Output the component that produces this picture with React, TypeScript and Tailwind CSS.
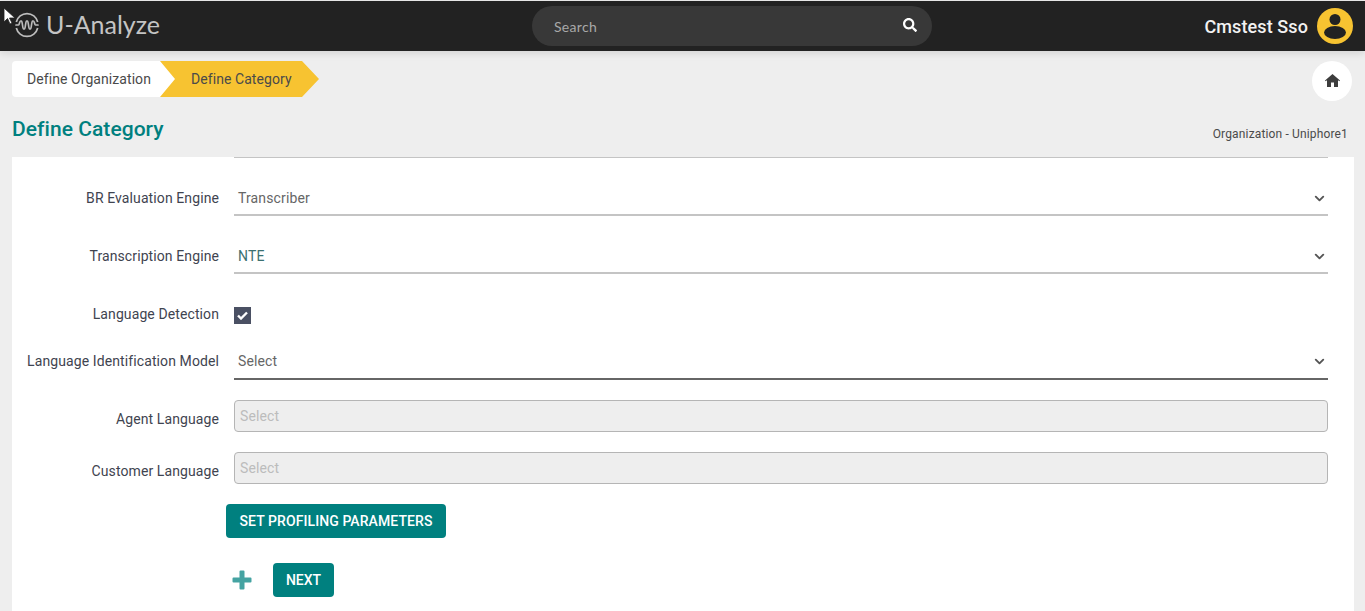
import { FaSearch } from "react-icons/fa";
import { ChevronDown } from "lucide-react";
import type { ReactNode } from "react";

function Logo() {
  return (
    <svg width="26" height="26" viewBox="0 0 26 26" fill="none" stroke="#bdbdbd" strokeWidth="1.700" className="shrink-0">
      <path d="M2.300 10A11 11 0 0 1 23.700 10" />
      <path d="M2.300 16A11 11 0 0 0 23.700 16" />
      <path
        d="M2 13h2.500c1 0 1-4 2-4h1c1 0 1 8 2 8h1c1 0 1-8 2-8h1c1 0 1 8 2 8h1c1 0 1-8 2-8h1c1 0 1 4 2 4H24"
        strokeLinecap="round"
      />
    </svg>
  );
}

function Avatar() {
  return (
    <svg width="36" height="36" viewBox="0 0 36 36" className="shrink-0">
      <circle cx="18" cy="18" r="18" fill="#f7c331" />
      <circle cx="18" cy="11.500" r="5.500" fill="#222222" />
      <ellipse cx="18" cy="24.500" rx="11" ry="6.500" fill="#222222" />
    </svg>
  );
}

function HomeIcon() {
  return (
    <svg width="15" height="13" viewBox="0 0 15 13" fill="#3d3d3d" className="mb-[2px]">
      <path d="M7.500 0 15 6.500l-.6.800L13 6.300V13H9V8.500H6V13H2V6.300L.6 7.300 0 6.500z" />
    </svg>
  );
}

function Row({
  label,
  className,
  labelClass,
  children,
}: {
  label: string;
  className: string;
  labelClass: string;
  children: ReactNode;
}) {
  return (
    <div className={`flex items-center ${className}`}>
      <label className={`w-[207px] shrink-0 text-right text-[14px] leading-5 tracking-[0.1px] text-[#3f4450] ${labelClass}`}>
        {label}
      </label>
      <div className="ml-[15px] min-w-0 flex-1">{children}</div>
    </div>
  );
}

function Select({ value, dark, textColor }: { value: string; dark?: boolean; textColor?: string }) {
  return (
    <div
      className={`flex items-center justify-between border-b-2 pl-1 pr-[1px] ${dark ? "h-[34px] border-[#666666] pb-[2px]" : "h-8 border-[#c4c4c4] pb-[1px]"}`}
    >
      <span className={`text-[14px] tracking-[0.14px] ${textColor ?? "text-[#666666]"}`}>{value}</span>
      <ChevronDown size={15} strokeWidth={3} className="text-[#555555]" />
    </div>
  );
}

function DisabledInput() {
  return (
    <div className="flex h-8 items-center rounded border border-[#b5b5b5] bg-[#eeeeee] px-[5px] text-[14px] tracking-[0.14px] text-[#bcbcbc]">
      Select
    </div>
  );
}

export default function App() {
  return (
    <div className="relative flex h-[611px] flex-col overflow-hidden bg-[#eeeeee] font-['Roboto',sans-serif]">
      {/* mouse pointer caught in the screenshot */}
      <svg width="13" height="18" viewBox="0 0 13 18" className="absolute left-[3px] top-[7px] z-10">
        <path d="M1 1v14l3.500-3.500L7 17l2-1-2.500-5H12z" fill="#ffffff" stroke="#222222" strokeWidth="0.8" />
      </svg>

      <header className="mt-px flex h-[50px] shrink-0 items-center justify-between bg-[#222222] pl-[14px] pr-[12px] shadow-[0_2px_8px_rgba(0,0,0,0.12)]">
        <div className="mb-[3px] flex w-[518px] items-center gap-[6px]">
          <Logo />
          <span className="font-['Lato',sans-serif] text-[25px] leading-none text-[#c4c4c4]">U-Analyze</span>
        </div>
        <div className="flex h-10 w-[400px] items-center justify-between rounded-full bg-[#383838] pl-[22px] pr-[15px]">
          <span className="font-['Lato',sans-serif] text-[14px] tracking-[0.3px] text-[#a8a8a8]">Search</span>
          <FaSearch size={14} className="mb-[2px] text-white" />
        </div>
        <div className="flex w-[421px] items-center justify-end gap-[9px]">
          <span className="text-[18px] font-medium tracking-[0.1px] text-[#f2f2f2]">Cmstest Sso</span>
          <Avatar />
        </div>
      </header>

      <div className="mt-[10px] flex items-start justify-between pl-3 pr-[13px]">
        <div className="flex h-9 items-center text-[14px] tracking-[0.07px] text-[#4a4a4a]">
          <div className="flex h-full w-[163px] items-center rounded-l bg-white pl-[15px]">Define Organization</div>
          <div className="-ml-[15px] flex h-full w-[159px] items-center bg-[#f7c331] pl-[31px] [clip-path:polygon(0_0,142px_0,159px_18px,142px_36px,0_36px,15px_18px)]">
            Define Category
          </div>
        </div>
        <div className="flex h-10 w-10 items-center justify-center rounded-full bg-white">
          <HomeIcon />
        </div>
      </div>

      <div className="mt-[14px] flex items-end justify-between pl-3 pr-[17px]">
        <h1 className="text-[21px] font-medium leading-7 tracking-[0.05px] text-[#00807f]">Define Category</h1>
        <span className="text-[12px] tracking-[0.15px] text-[#4a4a4a]">Organization - Uniphore1</span>
      </div>

      <main className="ml-3 mr-[11px] mt-[14px] flex-1 bg-white pr-[26px]">
        <div className="ml-[222px] h-px bg-[#c4c4c4]" />
        <Row label="BR Evaluation Engine" labelClass="mb-1" className="mt-[26px]">
          <Select value="Transcriber" />
        </Row>
        <Row label="Transcription Engine" labelClass="mb-1" className="mt-[26px]">
          <Select value="NTE" textColor="text-[#3b7070]" />
        </Row>
        <Row label="Language Detection" labelClass="mb-[2px]" className="mt-[32px] h-[18px]">
          <div className="flex h-[17px] w-[17px] items-center justify-center bg-[#4a5063]">
            <svg width="11" height="9" viewBox="0 0 11 9" fill="none" stroke="#ffffff" strokeWidth="2.400">
              <path d="M1 4.500 4 7.500 10 1.500" />
            </svg>
          </div>
        </Row>
        <Row label="Language Identification Model" labelClass="mb-1" className="mt-[22px]">
          <Select value="Select" dark />
        </Row>
        <Row label="Agent Language" labelClass="mt-[6px]" className="mt-5">
          <DisabledInput />
        </Row>
        <Row label="Customer Language" labelClass="mt-[6px]" className="mt-5">
          <DisabledInput />
        </Row>
        <div className="ml-[214px] mt-5">
          <button className="h-[34px] w-[220px] rounded bg-[#00807f] text-[14px] font-medium tracking-[0.08px] text-white">
            SET PROFILING PARAMETERS
          </button>
        </div>
        <div className="ml-[220px] mt-[25px] flex items-center">
          <svg width="20" height="20" viewBox="0 0 20 20" fill="#45a3a2">
            <path d="M7.500 1.500a1 1 0 0 1 1-1h3a1 1 0 0 1 1 1v6h6a1 1 0 0 1 1 1v3a1 1 0 0 1-1 1h-6v6a1 1 0 0 1-1 1h-3a1 1 0 0 1-1-1v-6h-6a1 1 0 0 1-1-1v-3a1 1 0 0 1 1-1h6z" />
          </svg>
          <button className="ml-[21px] h-[34px] w-[61px] rounded bg-[#00807f] text-[14px] font-medium text-white">
            NEXT
          </button>
        </div>
      </main>
    </div>
  );
}
